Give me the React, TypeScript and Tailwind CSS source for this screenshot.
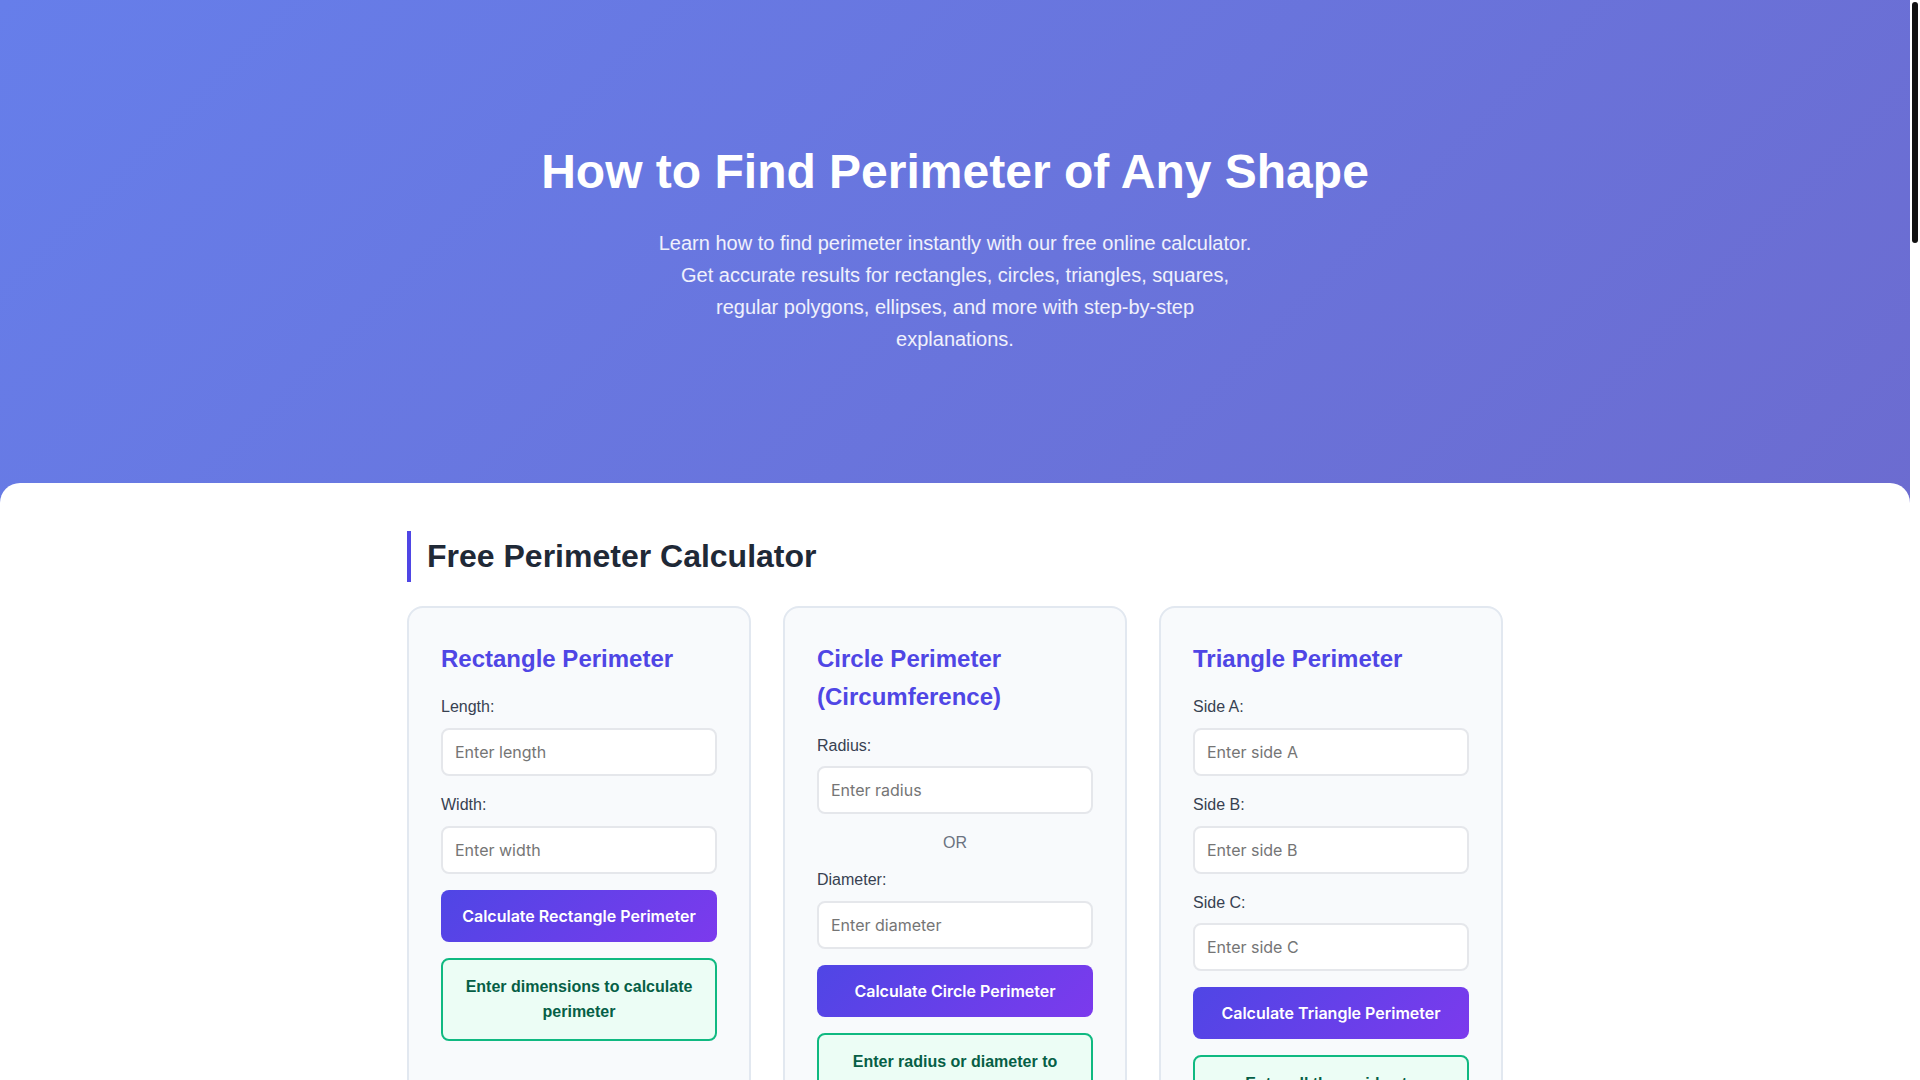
type Field = { label: string; placeholder: string }

type CalcCardProps = {
    title: string
    fields: Field[]
    altFields?: Field[]
    button: string
    result: string
}

const inputCls =
    "block w-full h-[48px] px-3 border-2 border-[#e5e7eb] rounded-lg bg-white text-base text-gray-800 font-['Inter',sans-serif] placeholder:text-[#757575] outline-none"

const FieldRow: React.FC<Field> = ({ label, placeholder }) => (
    <div className="mb-4">
        <label className="block mb-2 text-[#374151]">{label}</label>
        <input type="number" placeholder={placeholder} className={inputCls} />
    </div>
)

const CalcCard: React.FC<CalcCardProps> = ({ title, fields, altFields, button, result }) => (
    <div className="bg-[#f8fafc] border-2 border-[#e2e8f0] rounded-2xl p-8">
        <h3 className="text-2xl leading-[1.6] font-bold text-[#4f46e5] mb-4">{title}</h3>
        {fields.map((f) => (
            <FieldRow key={f.label} {...f} />
        ))}
        {altFields && (
            <>
                <div className="text-center text-[#6b7280] mb-[11px]">OR</div>
                {altFields.map((f) => (
                    <FieldRow key={f.label} {...f} />
                ))}
            </>
        )}
        <button className="block w-full py-4 mb-4 rounded-lg text-white text-base leading-[normal] font-semibold font-['Inter',sans-serif] bg-[linear-gradient(135deg,#4f46e5_0%,#7c3aed_100%)]">
            {button}
        </button>
        <div className="border-2 border-[#10b981] bg-[#ecfdf5] rounded-lg px-4 py-[14px] text-center font-bold text-[#065f46]">
            {result}
        </div>
    </div>
)

const App: React.FC = () => {
    return (
        <div className="flex items-start bg-white">
            <div className="flex-1 min-w-0 flex flex-col min-h-[4800px] leading-[1.6] font-['Liberation_Sans',Arial,sans-serif] bg-[linear-gradient(135deg,#667eea_0%,#764ba2_100%)]">
                {/* Hero */}
                <header className="text-center px-5 pt-[134px] pb-[128px]">
                    <h1 className="text-5xl leading-[1.6] font-bold text-white mb-4">
                        How to Find Perimeter of Any Shape
                    </h1>
                    <p className="text-xl leading-[1.6] text-white/90 max-w-[600px] mx-auto">
                        Learn how to find perimeter instantly with our free online calculator. Get accurate results
                        for rectangles, circles, triangles, squares, regular polygons, ellipses, and more with
                        step-by-step explanations.
                    </p>
                </header>

                {/* Main content */}
                <main className="flex-1 bg-white rounded-t-[20px] pt-12 pb-20">
                    <div className="max-w-[1096px] mx-auto">
                        <h2 className="text-[32px] leading-[1.6] font-bold text-[#1f2937] border-l-4 border-[#4f46e5] pl-4 mb-6">
                            Free Perimeter Calculator
                        </h2>
                        <div className="grid grid-cols-3 gap-8">
                            <CalcCard
                                title="Rectangle Perimeter"
                                fields={[
                                    { label: "Length:", placeholder: "Enter length" },
                                    { label: "Width:", placeholder: "Enter width" },
                                ]}
                                button="Calculate Rectangle Perimeter"
                                result="Enter dimensions to calculate perimeter"
                            />
                            <CalcCard
                                title="Circle Perimeter (Circumference)"
                                fields={[{ label: "Radius:", placeholder: "Enter radius" }]}
                                altFields={[{ label: "Diameter:", placeholder: "Enter diameter" }]}
                                button="Calculate Circle Perimeter"
                                result="Enter radius or diameter to calculate circumference"
                            />
                            <CalcCard
                                title="Triangle Perimeter"
                                fields={[
                                    { label: "Side A:", placeholder: "Enter side A" },
                                    { label: "Side B:", placeholder: "Enter side B" },
                                    { label: "Side C:", placeholder: "Enter side C" },
                                ]}
                                button="Calculate Triangle Perimeter"
                                result="Enter all three sides to calculate perimeter"
                            />
                            <CalcCard
                                title="Square Perimeter"
                                fields={[{ label: "Side Length:", placeholder: "Enter side length" }]}
                                button="Calculate Square Perimeter"
                                result="Enter side length to calculate perimeter"
                            />
                            <CalcCard
                                title="Regular Polygon Perimeter"
                                fields={[
                                    { label: "Number of Sides:", placeholder: "Enter number of sides" },
                                    { label: "Side Length:", placeholder: "Enter side length" },
                                ]}
                                button="Calculate Polygon Perimeter"
                                result="Enter values to calculate perimeter"
                            />
                            <CalcCard
                                title="Ellipse Perimeter"
                                fields={[
                                    { label: "Semi-major Axis (a):", placeholder: "Enter semi-major axis" },
                                    { label: "Semi-minor Axis (b):", placeholder: "Enter semi-minor axis" },
                                ]}
                                button="Calculate Ellipse Perimeter"
                                result="Enter both axes to calculate perimeter"
                            />
                        </div>
                    </div>
                </main>
            </div>

            {/* Scrollbar strip */}
            <div className="sticky top-0 w-[10px] h-screen shrink-0 bg-white pt-[2px]">
                <div className="mx-auto w-[6px] h-[241px] rounded-full bg-[#111111]"></div>
            </div>
        </div>
    )
}

export default App
